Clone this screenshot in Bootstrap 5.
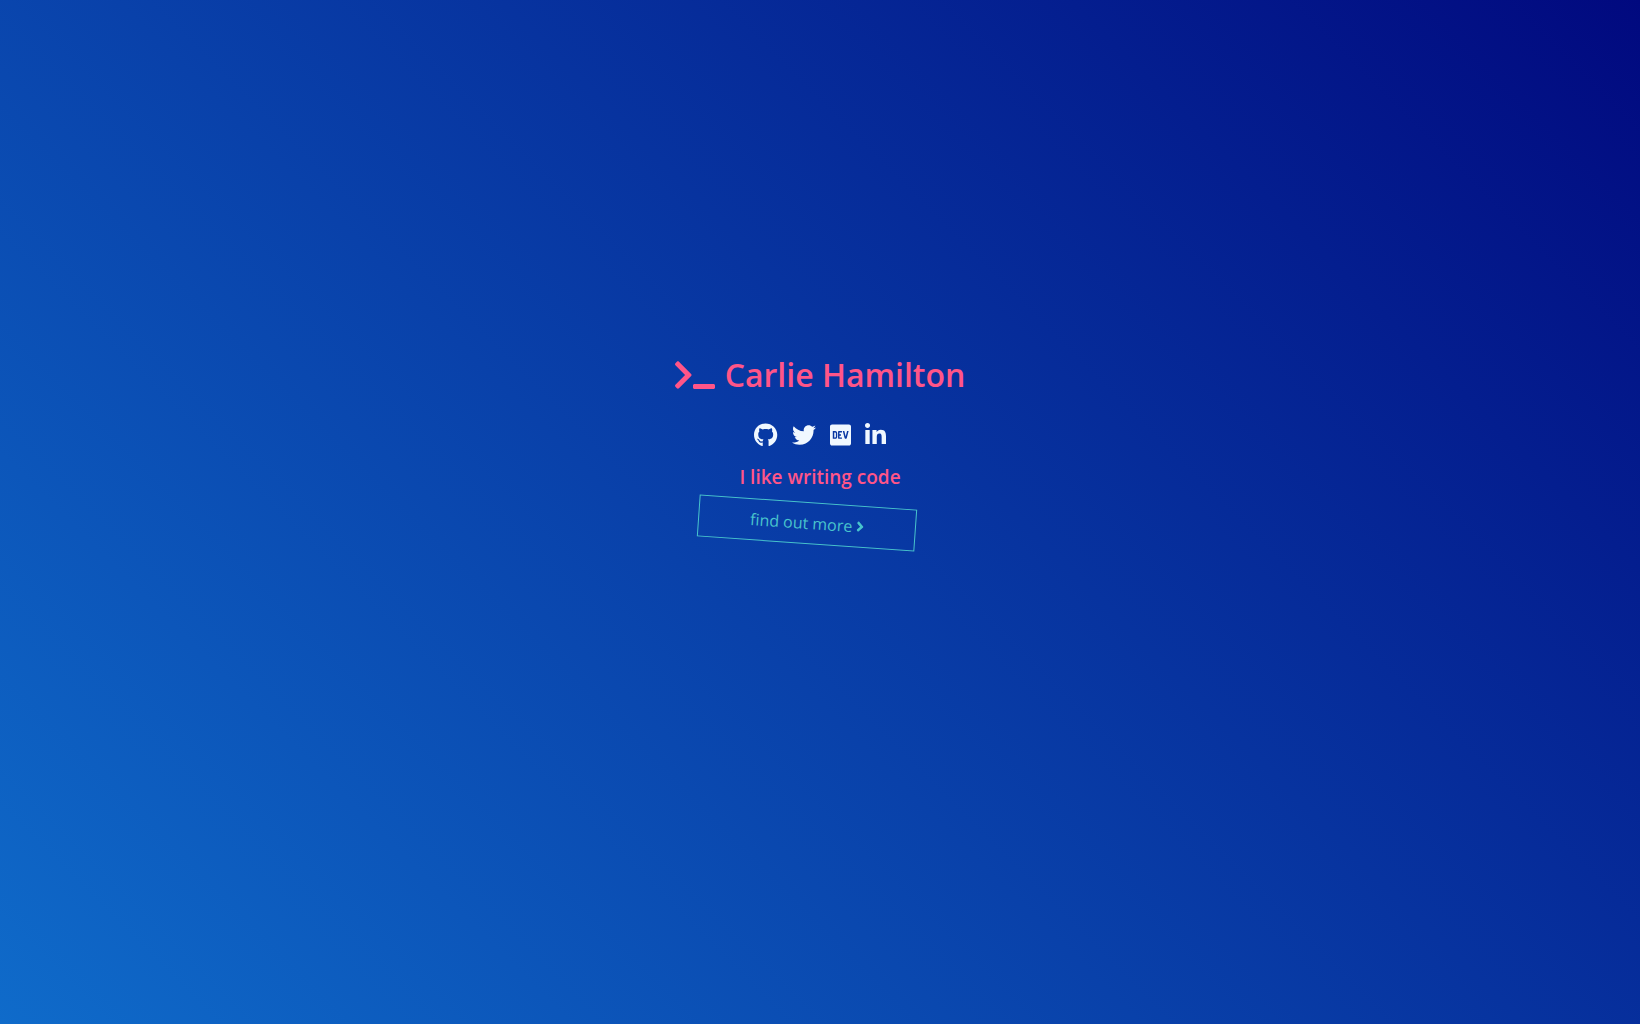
<!DOCTYPE html>
<html lang="en">
<head>
<meta charset="utf-8">
<meta name="viewport" content="width=device-width, initial-scale=1">
<title>Carlie Hamilton</title>
<link href="https://cdn.jsdelivr.net/npm/bootstrap@5.3.0/dist/css/bootstrap.min.css" rel="stylesheet">
<style>
body { background: linear-gradient(45deg, #0f6bca, #01097f); font-family: "Open Sans", sans-serif; }
.intro { padding-top: 34vh; }
.pink { color: #ff5588; font-weight: 600; }
.site-name { font-size: 32px; line-height: 54px; gap: 10px; margin-bottom: 21px; }
.site-name svg { width: 40px; height: 32px; }
.social { gap: 14px; margin-bottom: 15px; }
.social a { color: #f0f8ff; }
.social svg { height: 24px; }
.tagline { font-size: 19px; line-height: 30px; margin-bottom: 10px; }
.more { width: 218px; height: 42px; margin-right: 26px; border: 1px solid #48c4cc; color: #48c4cc; font-size: 16px; gap: 5px; transform: rotate(4deg); }
.more svg { height: 16px; }
</style>
</head>
<body class="min-vh-100">
<main class="intro d-flex flex-column align-items-center">
  <h1 class="pink site-name d-flex align-items-center">
    <svg viewBox="0 0 640 512" fill="currentColor" aria-hidden="true"><path d="M257.981 272.971L63.638 467.314c-9.373 9.373-24.569 9.373-33.941 0L7.029 444.647c-9.357-9.357-9.375-24.522-.04-33.901L161.011 256 6.99 101.255c-9.335-9.379-9.317-24.544.04-33.901l22.667-22.667c9.373-9.373 24.569-9.373 33.941 0L257.981 239.03c9.373 9.372 9.373 24.568 0 33.941zM640 456v-32c0-13.255-10.745-24-24-24H312c-13.255 0-24 10.745-24 24v32c0 13.255 10.745 24 24 24h304c13.255 0 24-10.745 24-24z"/></svg>
    <span>Carlie Hamilton</span>
  </h1>
  <nav class="social d-flex" aria-label="Social links">
    <a class="d-flex" href="#" aria-label="GitHub"><svg viewBox="0 0 496 512" fill="currentColor"><path d="M165.9 397.4c0 2-2.3 3.6-5.2 3.6-3.3.3-5.6-1.3-5.6-3.6 0-2 2.3-3.6 5.2-3.6 3-.3 5.6 1.3 5.6 3.6zm-31.1-4.5c-.7 2 1.3 4.3 4.3 4.9 2.6 1 5.6 0 6.2-2s-1.3-4.3-4.3-5.2c-2.6-.7-5.5.3-6.2 2.3zm44.2-1.7c-2.9.7-4.9 2.6-4.6 4.9.3 2 2.9 3.3 5.9 2.6 2.9-.7 4.9-2.6 4.6-4.6-.3-1.9-3-3.2-5.9-2.9zM244.8 8C106.1 8 0 113.3 0 252c0 110.9 69.8 205.8 169.5 239.2 12.8 2.3 17.3-5.6 17.3-12.1 0-6.2-.3-40.4-.3-61.4 0 0-70 15-84.7-29.8 0 0-11.4-29.1-27.8-36.6 0 0-22.9-15.7 1.6-15.4 0 0 24.9 2 38.6 25.8 21.9 38.6 58.6 27.5 72.9 20.9 2.3-16 8.8-27.1 16-33.7-55.9-6.2-112.3-14.3-112.3-110.5 0-27.5 7.6-41.3 23.6-58.9-2.6-6.5-11.1-33.3 2.6-67.9 20.9-6.5 69 27 69 27 20-5.6 41.5-8.5 62.8-8.5s42.8 2.9 62.8 8.5c0 0 48.1-33.6 69-27 13.7 34.7 5.2 61.4 2.6 67.9 16 17.7 25.8 31.5 25.8 58.9 0 96.5-58.9 104.2-114.8 110.5 9.2 7.9 17 22.9 17 46.4 0 33.7-.3 75.4-.3 83.6 0 6.5 4.6 14.4 17.3 12.1C428.2 457.8 496 362.9 496 252 496 113.3 383.5 8 244.8 8z"/></svg></a>
    <a class="d-flex" href="#" aria-label="Twitter"><svg viewBox="0 0 512 512" fill="currentColor"><path d="M459.37 151.716c.325 4.548.325 9.097.325 13.645 0 138.72-105.583 298.558-298.558 298.558-59.452 0-114.68-17.219-161.137-47.106 8.447.974 16.568 1.299 25.34 1.299 49.055 0 94.213-16.568 130.274-44.832-46.132-.975-84.792-31.188-98.112-72.772 6.498.974 12.995 1.624 19.818 1.624 9.421 0 18.843-1.3 27.614-3.573-48.081-9.747-84.143-51.98-84.143-102.985v-1.299c13.969 7.797 30.214 12.67 47.431 13.319-28.264-18.843-46.781-51.005-46.781-87.391 0-19.492 5.197-37.36 14.294-52.954 51.655 63.675 129.3 105.258 216.365 109.807-1.624-7.797-2.599-15.918-2.599-24.04 0-57.828 46.782-104.934 104.934-104.934 30.213 0 57.502 12.67 76.67 33.137 23.715-4.548 46.456-13.32 66.599-25.34-7.798 24.366-24.366 44.833-46.132 57.827 21.117-2.273 41.584-8.122 60.426-16.243-14.292 20.791-32.161 39.308-52.628 54.253z"/></svg></a>
    <a class="d-flex" href="#" aria-label="DEV"><svg viewBox="0 0 448 512" fill="currentColor"><path d="M120.12 208.29c-3.88-2.9-7.77-4.35-11.65-4.35H91.03v104.47h17.45c3.88 0 7.77-1.45 11.65-4.35 3.88-2.9 5.82-7.25 5.82-13.06v-69.65c-.01-5.8-1.96-10.16-5.83-13.06zM404.1 32H43.9C19.7 32 .06 51.59 0 75.8v360.4C.06 460.41 19.7 480 43.9 480h360.2c24.21 0 43.84-19.59 43.9-43.8V75.8c-.06-24.21-19.7-43.8-43.9-43.8zM154.2 291.19c0 18.81-11.61 47.31-48.36 47.25h-46.4V172.98h47.38c35.44 0 47.36 28.46 47.37 47.28l.01 70.93zm100.68-88.66H201.6v38.42h32.57v29.57H201.6v38.41h53.29v29.57h-62.18c-11.16.29-20.44-8.53-20.72-19.69V193.7c-.27-11.15 8.56-20.41 19.71-20.69h63.19l-.01 29.52zm103.64 115.29c-13.2 30.75-36.85 24.63-47.44 0l-38.53-144.8h32.57l29.71 113.72 29.57-113.72h32.58l-38.46 144.8z"/></svg></a>
    <a class="d-flex" href="#" aria-label="LinkedIn"><svg viewBox="0 0 448 512" fill="currentColor"><path d="M100.28 448H7.4V148.9h92.88zM53.79 108.1C24.09 108.1 0 83.5 0 53.8a53.79 53.79 0 0 1 107.58 0c0 29.7-24.1 54.3-53.79 54.3zM447.9 448h-92.68V302.4c0-34.7-.7-79.2-48.29-79.2-48.29 0-55.69 37.7-55.69 76.7V448h-92.78V148.9h89.08v40.8h1.3c12.4-23.5 42.69-48.3 87.88-48.3 94 0 111.28 61.9 111.28 142.3V448z"/></svg></a>
  </nav>
  <h2 class="pink tagline">I like writing code</h2>
  <a class="more d-flex align-items-center justify-content-center text-decoration-none" href="#">find out more
    <svg viewBox="24 0 208 512" fill="currentColor" aria-hidden="true"><path d="M224.3 273l-136 136c-9.4 9.4-24.6 9.4-33.9 0l-22.6-22.6c-9.4-9.4-9.4-24.6 0-33.9l96.4-96.4-96.4-96.4c-9.4-9.4-9.4-24.6 0-33.9L54.3 103c9.4-9.4 24.6-9.4 33.9 0l136 136c9.5 9.4 9.5 24.6.1 34z"/></svg>
  </a>
</main>
<script src="https://cdn.jsdelivr.net/npm/bootstrap@5.3.0/dist/js/bootstrap.bundle.min.js"></script>
</body>
</html>
